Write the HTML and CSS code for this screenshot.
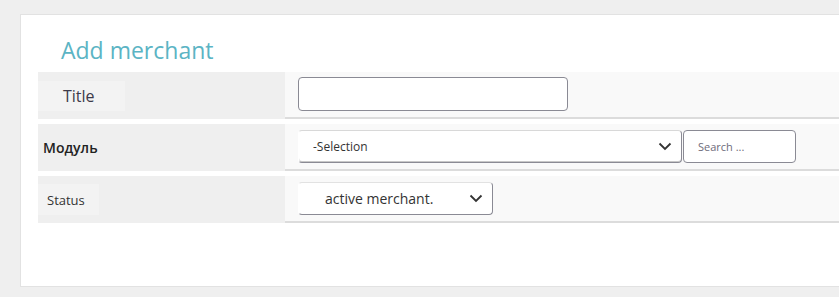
FILE: index.html
```html
<!DOCTYPE html>
<html lang="en">
<head>
  <meta charset="UTF-8">
  <meta name="viewport" content="width=device-width, initial-scale=1.0">
  <title>Add merchant</title>
  <link rel="stylesheet" href="styles.css">
</head>
<body>
  <div class="card">
    <h2 class="card-title">Add merchant</h2>

    <div class="form-row">
      <div class="form-label"><span class="label-box title-label">Title</span></div>
      <div class="form-field">
        <input type="text" class="text-input">
      </div>
    </div>

    <div class="form-row">
      <div class="form-label"><span class="module-label">Модуль</span></div>
      <div class="form-field">
        <span class="select-wrap module-select">
          <select class="select-input">
            <option>-Selection</option>
          </select>
          <svg class="chevron" width="14" height="9" viewBox="0 0 14 9"><path d="M1.5 1.5 L7 7 L12.5 1.5" fill="none" stroke="#333" stroke-width="1.8"/></svg>
        </span>
        <input type="text" class="search-input" placeholder="Search ...">
      </div>
    </div>

    <div class="form-row">
      <div class="form-label"><span class="label-box status-label">Status</span></div>
      <div class="form-field">
        <span class="select-wrap status-select">
          <select class="select-input">
            <option>active merchant.</option>
          </select>
          <svg class="chevron" width="14" height="9" viewBox="0 0 14 9"><path d="M1.5 1.5 L7 7 L12.5 1.5" fill="none" stroke="#333" stroke-width="1.8"/></svg>
        </span>
      </div>
    </div>
  </div>
</body>
</html>
```

FILE: styles.css
```css
body {
  margin: 0;
  background: #efefef;
  font-family: 'Open Sans', 'Noto Sans', sans-serif;
  overflow: hidden;
}

.card {
  margin: 14px 0 0 20px;
  height: 273px;
  box-sizing: border-box;
  background: #fff;
  border: 1px solid #e2e2e2;
  border-right: none;
  padding: 0 0 0 17px;
}

.card-title {
  margin: 0;
  padding: 20px 0 0 23px;
  height: 37px;
  font-size: 23px;
  font-weight: 400;
  line-height: 30px;
  color: #5bb4c4;
}

.form-row {
  display: grid;
  grid-template-columns: 247px 1fr;
  height: 47px;
  margin-bottom: 5px;
}

.form-label {
  background: #efefef;
  display: flex;
  align-items: center;
}

.label-box {
  background: #f3f3f3;
  display: flex;
  align-items: center;
}

.title-label {
  width: 62px;
  height: 30px;
  padding-left: 25px;
  font-size: 16px;
  color: #3d3a4a;
}

.status-label {
  width: 52px;
  height: 31px;
  padding-left: 9px;
  font-size: 13px;
  color: #333;
}

.module-label {
  padding-left: 5px;
  font-size: 14px;
  font-weight: 600;
  color: #222;
}

.form-field {
  background: #f9f9f9;
  border-bottom: 2px solid #dcdcdc;
  padding: 5px 13px 0;
  display: flex;
  align-items: flex-start;
}

.text-input {
  width: 270px;
  height: 34px;
  box-sizing: border-box;
  border: 1px solid #8a8a94;
  border-radius: 4px;
  background: #fff;
  margin: 0;
}

.select-wrap {
  position: relative;
  display: block;
  margin-top: 1px;
}

.select-input {
  appearance: none;
  -webkit-appearance: none;
  height: 33px;
  box-sizing: border-box;
  border: 1px solid #8a8a94;
  border-radius: 4px;
  background: #fff;
  font-family: 'Open Sans', sans-serif;
  color: #333;
  margin: 0;
  display: block;
}

.module-select .select-input {
  width: 384px;
  padding-left: 14px;
  font-size: 12px;
  border-left-color: #fff;
  border-top-color: #d8d8d8;
  box-shadow: inset 0 -1px 0 #c8c8c8;
}

.status-select .select-input {
  width: 195px;
  padding-left: 26px;
  font-size: 14px;
  border-left-color: #fff;
  border-top-color: #e2e2e2;
}

.chevron {
  position: absolute;
  top: 12px;
  right: 10px;
  pointer-events: none;
}

.search-input {
  width: 113px;
  height: 33px;
  box-sizing: border-box;
  margin: 1px 0 0 1px;
  border: 1px solid #8a8a94;
  border-radius: 4px;
  background: #fff;
  padding-left: 14px;
  font-family: 'Open Sans', sans-serif;
  font-size: 11px;
}

.search-input::placeholder {
  color: #6e6b7a;
}
```
